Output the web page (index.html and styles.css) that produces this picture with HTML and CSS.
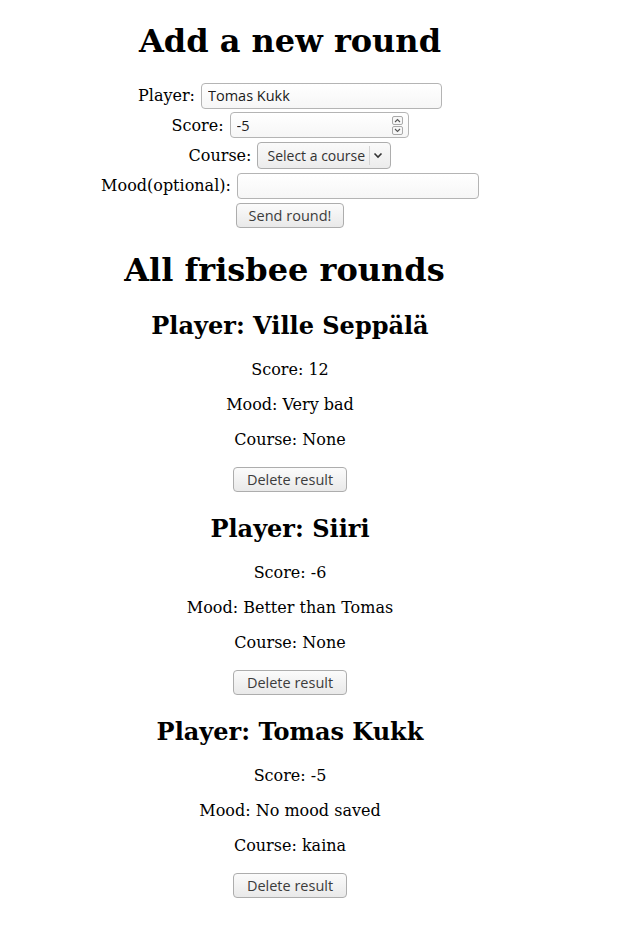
FILE: index.html
```html
<!DOCTYPE html>
<html lang="en">
<head>
<meta charset="utf-8">
<title>Frisbee rounds</title>
<link rel="stylesheet" href="styles.css">
</head>
<body>
<div class="page">
  <h1 class="title title-add">Add a new round</h1>
  <form class="round-form">
    <div class="row row-player"><label>Player:</label><input class="field field-player" type="text" value="Tomas Kukk"></div>
    <div class="row row-score"><label>Score:</label>
      <span class="field field-score"><input class="bare" type="text" value="-5"><span class="spin"><span class="spin-btn"><svg width="7" height="5" viewBox="0 0 7 5"><path d="M1 4 L3.5 1.5 L6 4" fill="none" stroke="#555" stroke-width="1.1"/></svg></span><span class="spin-btn"><svg width="7" height="5" viewBox="0 0 7 5"><path d="M1 1 L3.5 3.5 L6 1" fill="none" stroke="#555" stroke-width="1.1"/></svg></span></span></span>
    </div>
    <div class="row row-course"><label>Course:</label>
      <span class="select"><span class="select-text">Select a course</span><span class="select-div"></span><svg class="chev" width="10" height="7" viewBox="0 0 10 7"><path d="M1.5 1.5 L5 5 L8.5 1.5" fill="none" stroke="#333" stroke-width="1.6"/></svg></span>
    </div>
    <div class="row row-mood"><label>Mood(optional):</label><input class="field field-mood" type="text" value=""></div>
    <div class="row row-btn"><button type="button" class="btn btn-send">Send round!</button></div>
  </form>

  <h1 class="title title-all">All frisbee rounds</h1>

  <div class="round">
    <h2>Player: Ville Seppälä</h2>
    <p>Score: 12</p>
    <p>Mood: Very bad</p>
    <p>Course: None</p>
    <div class="actions"><button type="button" class="btn">Delete result</button></div>
  </div>
  <div class="round">
    <h2>Player: Siiri</h2>
    <p>Score: -6</p>
    <p>Mood: Better than Tomas</p>
    <p>Course: None</p>
    <div class="actions"><button type="button" class="btn">Delete result</button></div>
  </div>
  <div class="round">
    <h2>Player: Tomas Kukk</h2>
    <p>Score: -5</p>
    <p>Mood: No mood saved</p>
    <p>Course: kaina</p>
    <div class="actions"><button type="button" class="btn">Delete result</button></div>
  </div>
</div>
</body>
</html>
```
FILE: styles.css
```css
html, body {
  background: #ffffff;
}
body {
  margin: 0 8px 8px 8px;
  padding-top: 3px;
  font-family: "DejaVu Serif", serif;
  font-size: 16px;
  color: #000;
}
.page {
  width: 564px;
  text-align: center;
}
.title {
  font-size: 32px;
  font-weight: bold;
  margin: 21px 0;
  line-height: 37px;
}
.title-add {
  margin-top: 20px;
}
.title-all {
  margin-top: 22px;
  padding-right: 11px;
}
.round-form {
  margin: 0;
}
.row {
  display: flex;
  justify-content: center;
  align-items: center;
  gap: 6px;
  height: 30px;
}
.row-player { height: 29px; }
.row-score { height: 30px; }
.row-course { height: 31px; }
.row-mood { height: 29px; }
.row-btn { height: 30px; }
.row label {
  line-height: 19px;
}
.field {
  box-sizing: border-box;
  height: 26px;
  border: 1px solid #b4b4b4;
  border-radius: 4px;
  background: linear-gradient(#ffffff, #f6f6f6);
  font-family: "Open Sans", sans-serif;
  font-size: 14.5px;
  color: #1a1a1a;
  padding: 0 6px;
  margin: 0;
  outline: none;
}
.field-player { width: 241px; }
.field-mood { width: 242px; }
.field-score {
  width: 179px;
  display: inline-flex;
  align-items: center;
  padding: 0 6px 0 6px;
}
.bare {
  border: 0;
  background: transparent;
  font: inherit;
  color: inherit;
  padding: 0;
  margin: 0;
  flex: 1;
  min-width: 0;
  outline: none;
}
.spin {
  display: flex;
  flex-direction: column;
  gap: 1px;
  margin-right: -1px;
}
.spin-btn {
  box-sizing: border-box;
  width: 11px;
  height: 9px;
  border: 1px solid #a9a9a9;
  border-radius: 2px;
  background: #f7f7f7;
  display: flex;
  align-items: center;
  justify-content: center;
}
.select {
  box-sizing: border-box;
  height: 27px;
  width: 134px;
  display: inline-flex;
  align-items: center;
  border: 1px solid #adadad;
  border-radius: 4px;
  background: linear-gradient(#fafafa, #ececec);
  font-family: "Open Sans", sans-serif;
  font-size: 14px;
  color: #333;
  padding: 0 0 0 9px;
}
.select-text {
  white-space: nowrap;
}
.select-div {
  width: 1px;
  align-self: stretch;
  margin: 3px 3px 3px 4px;
  background: #d4d4d4;
}
.btn {
  box-sizing: border-box;
  height: 25px;
  padding: 0;
  border: 1px solid #adadad;
  border-radius: 4px;
  background: linear-gradient(#fbfbfb, #e9e9e9);
  font-family: "Open Sans", sans-serif;
  font-size: 14.5px;
  color: #3c3c3c;
  margin: 0;
}
.btn-send {
  width: 108px;
}
.round h2 {
  font-size: 24px;
  font-weight: bold;
  margin: 23px 0 20px;
  line-height: 28px;
}
.round p {
  margin: 16px 0;
  line-height: 19px;
}
.actions {
  padding: 2px 0 0;
}
.actions .btn {
  width: 114px;
  vertical-align: top;
}
```
